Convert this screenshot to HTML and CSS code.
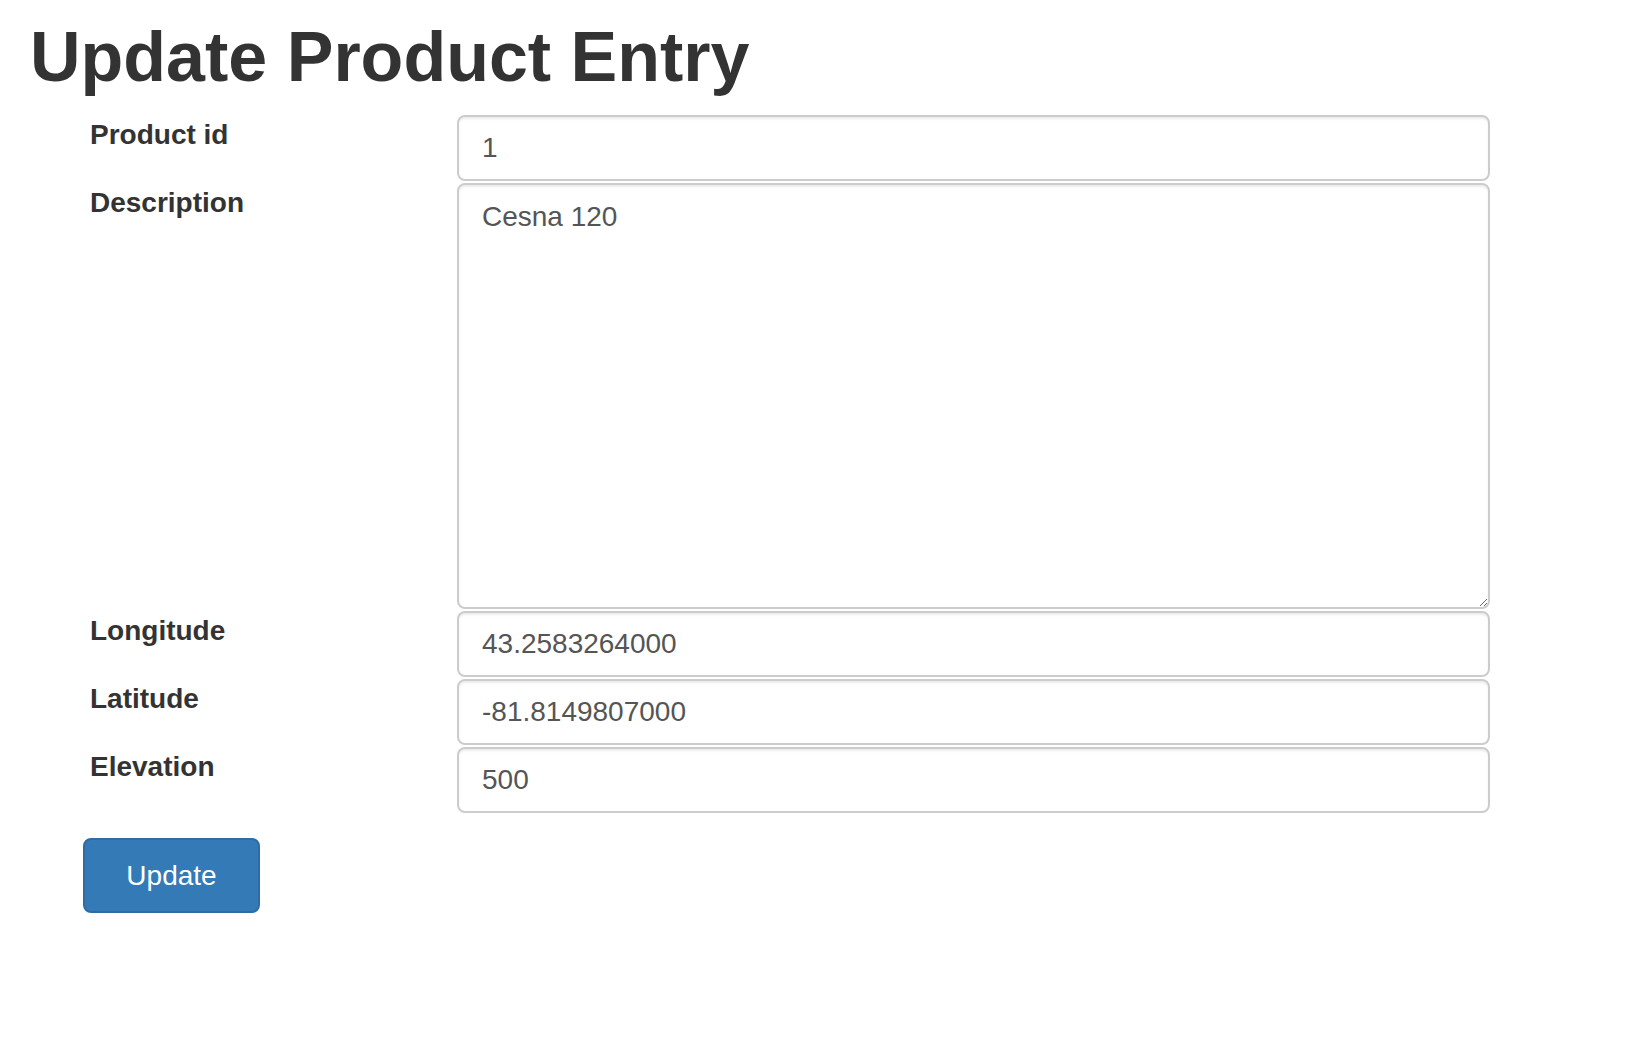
FILE: index.html
```html
<!DOCTYPE html>
<html lang="en">
<head>
<meta charset="utf-8">
<title>Update Product Entry</title>
<link rel="stylesheet" href="styles.css">
</head>
<body>
<main class="page">
  <h1 class="title">Update Product Entry</h1>
  <form class="entry-form">
    <label class="field-label" for="pid">Product id</label>
    <input class="field-input" id="pid" type="text" value="1">
    <label class="field-label" for="desc">Description</label>
    <textarea class="field-input field-area" id="desc">Cesna 120</textarea>
    <label class="field-label" for="lon">Longitude</label>
    <input class="field-input" id="lon" type="text" value="43.2583264000">
    <label class="field-label" for="lat">Latitude</label>
    <input class="field-input" id="lat" type="text" value="-81.8149807000">
    <label class="field-label" for="elev">Elevation</label>
    <input class="field-input" id="elev" type="text" value="500">
    <div class="actions">
      <button class="btn-primary" type="button">Update</button>
    </div>
  </form>
</main>
</body>
</html>
```
FILE: styles.css
```css
html, body {
  margin: 0;
  padding: 0;
  background: #ffffff;
}

.page {
  padding-top: 19px;
  font-family: "Liberation Sans", Arial, sans-serif;
  color: #333333;
}

.title {
  margin: 0;
  padding-left: 30px;
  font-family: "Liberation Sans", Arial, sans-serif;
  font-weight: bold;
  font-size: 70px;
  line-height: 77px;
  color: #333333;
}

.entry-form {
  margin-top: 19px;
  padding-left: 90px;
  display: grid;
  grid-template-columns: 367px 1033px;
  row-gap: 2px;
}

.field-label {
  font-family: "Liberation Sans", Arial, sans-serif;
  font-weight: bold;
  font-size: 28px;
  line-height: 40px;
  color: #333333;
}

.field-input {
  box-sizing: border-box;
  width: 100%;
  height: 66px;
  margin: 0;
  padding: 0 23px;
  border: 2px solid #cccccc;
  border-radius: 8px;
  background: #ffffff;
  box-shadow: inset 0 2px 2px rgba(0, 0, 0, 0.075);
  font-family: "Liberation Sans", Arial, sans-serif;
  font-size: 28px;
  line-height: 40px;
  color: #555555;
  outline: none;
}

.field-area {
  height: 426px;
  padding: 12px 23px;
  display: block;
}

.actions {
  grid-column: 1 / -1;
  margin-top: 23px;
  margin-left: -7px;
}

.btn-primary {
  box-sizing: border-box;
  width: 177px;
  height: 75px;
  padding: 0;
  border: 2px solid #2e6da4;
  border-radius: 8px;
  background: #337ab7;
  color: #ffffff;
  font-family: "Liberation Sans", Arial, sans-serif;
  font-size: 28px;
  line-height: 40px;
  cursor: pointer;
}
```
